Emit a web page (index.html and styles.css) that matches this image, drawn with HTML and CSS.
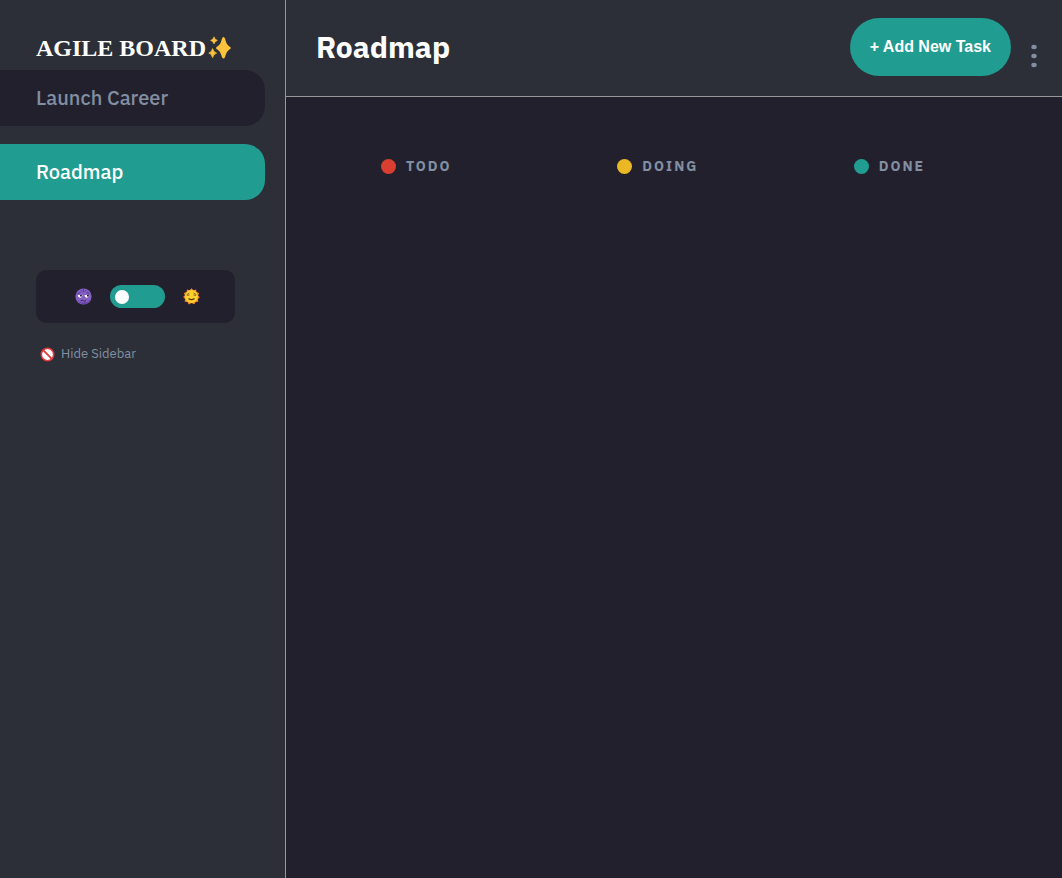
FILE: index.html
```html
<!DOCTYPE html>
<html lang="en">
<head>
<meta charset="utf-8">
<meta name="viewport" content="width=device-width, initial-scale=1">
<title>Agile Board</title>
<link rel="stylesheet" href="styles.css">
</head>
<body>
<div class="app">
  <aside class="sidebar">
    <div class="logo">
      <span>AGILE BOARD</span>
      <svg class="logo-icon" viewBox="0 0 24 24" aria-hidden="true">
        <g fill="#fbc23c">
          <path d="M15.5 1 Q16.6 1 17 2.5 C18.4 7.6 19.2 9 22.2 11 Q23.6 12 22.2 13 C19.2 15 18.4 16.4 17 21.2 Q15.5 24 14 21.2 C12.6 16.4 11.8 15 8.6 13 Q7.2 12 8.6 11 C11.8 9 12.6 7.6 14 2.5 Q14.4 1 15.5 1Z"/>
          <path d="M6 .8 Q6.7 3.8 9.4 4.4 Q6.7 5 6 8 Q5.3 5 2.6 4.4 Q5.3 3.8 6 .8Z" stroke="#fbc23c" stroke-width=".6"/>
          <path d="M4.6 12.6 Q5.4 16.2 8.6 17.1 Q5.4 18 4.6 21.6 Q3.8 18 .8 17.1 Q3.8 16.2 4.6 12.6Z" stroke="#fbc23c" stroke-width=".8"/>
        </g>
      </svg>
    </div>
    <nav class="boards">
      <a class="board" href="#launch-career">Launch Career</a>
      <a class="board board-active" href="#roadmap" aria-current="page">Roadmap</a>
    </nav>
    <div class="theme">
      <svg class="theme-icon" viewBox="0 0 18 18" aria-hidden="true">
        <circle cx="9" cy="9" r="8.6" fill="#8560c5"/>
        <path d="M1.5 12 Q4 16 9 17.4 Q14.5 16.8 16.5 12 Q13 15.8 9 15.6 Q4 15 1.5 12Z" fill="#60409a"/>
        <path d="M6 2.2 L7.5 3.8 M9 1.2 V4.2 M12 2.2 L10.8 3.8 M2.5 6 L6 4.6 M12 4.6 L15.5 6" stroke="#55368d" fill="none"/>
        <path d="M2.8 7.5 H8 Q7.7 10.5 5.3 10.3 Q3 10 2.8 7.5Z M10 7.5 H15.2 Q15 10 12.7 10.3 Q10.3 10.5 10 7.5Z" fill="#fff"/>
        <path d="M5.3 7.5 h2 v1.6 h-2z M12.7 7.5 h2 v1.6 h-2z" fill="#28203c"/>
        <path d="M6 13.6 Q7.5 12.2 9 13.6 T12 12.8" stroke="#342048" fill="none"/>
      </svg>
      <input class="switch" type="checkbox" role="switch" aria-label="Light theme">
      <svg class="theme-icon" viewBox="0 0 18 18" aria-hidden="true">
        <path d="M9 .2 L11 2.4 13.8 1.5 14.3 4.2 17 5.2 16 8 17.8 9.8 15.8 11.7 16.2 14.5 13.4 14.8 12 17.2 9 16 6.2 17.4 4.7 14.9 1.8 14.6 2.2 11.7 .2 9.6 2 7.8 1 5.2 3.7 4.2 4.3 1.5 7 2.4Z" fill="#fb872b"/>
        <circle cx="9" cy="9" r="6.8" fill="#ffd22f"/>
        <path d="M3.8 7.2 L6.8 5.2 M4.2 7.8 L7 7.4 M14.2 7.2 L11.2 5.2 M13.8 7.8 L11 7.4" stroke="#7a541c" stroke-width=".9" fill="none"/>
        <path d="M5.8 11 Q9 13.4 12.2 11" stroke="#5b3211" stroke-width="1.3" fill="none"/>
      </svg>
    </div>
    <button class="hide" type="button">
      <svg class="hide-icon" viewBox="0 0 15 15" aria-hidden="true">
        <circle cx="7.5" cy="7.5" r="6.2" fill="#fff" stroke="#e5383b" stroke-width="1.6"/>
        <path d="M3.2 3.2 L11.8 11.8" stroke="#e5383b" stroke-width="1.8"/>
      </svg>
      Hide Sidebar
    </button>
  </aside>
  <div class="content">
    <header class="header">
      <h1 class="title">Roadmap</h1>
      <button class="add" type="button">+ Add New Task</button>
      <button class="menu" type="button" aria-label="Board options">
        <svg class="menu-icon" viewBox="0 0 6 24" aria-hidden="true">
          <g fill="#828fa3"><ellipse cx="3" cy="3" rx="2.7" ry="2.2"/><ellipse cx="3" cy="12" rx="2.7" ry="2.2"/><ellipse cx="3" cy="21" rx="2.7" ry="2.2"/></g>
        </svg>
      </button>
    </header>
    <main class="columns">
      <section><h2 class="column-title"><span class="dot dot-todo"></span>TODO</h2></section>
      <section><h2 class="column-title"><span class="dot dot-doing"></span>DOING</h2></section>
      <section><h2 class="column-title"><span class="dot dot-done"></span>DONE</h2></section>
    </main>
  </div>
</div>
</body>
</html>
```
FILE: styles.css
```css
* { box-sizing: border-box; }

body {
  margin: 0;
  background: #23202d;
  color: #fff;
  font-family: "IBM Plex Sans", "Noto Sans", sans-serif;
}

button {
  border: 0;
  padding: 0;
  background: none;
  font-family: inherit;
  cursor: pointer;
}

.app {
  display: grid;
  grid-template-columns: 286px 1fr;
  min-height: 100vh;
}

.sidebar {
  background: #2c2f38;
  border-right: 1px solid #979797;
}

.logo {
  display: flex;
  align-items: center;
  gap: 2px;
  padding: 34px 0 8px 36px;
  font: bold 24px/28px "Liberation Serif", serif;
}

.logo-icon { width: 24px; height: 24px; }

.boards {
  display: grid;
  gap: 18px;
  margin-right: 20px;
}

.board {
  padding: 14px 36px;
  border-radius: 0 20px 20px 0;
  background: #23202d;
  color: #828fa3;
  font-size: 20px;
  font-weight: 500;
  line-height: 28px;
  text-decoration: none;
}

.board-active {
  background: #219c90;
  color: #fff;
}

.theme {
  display: flex;
  align-items: center;
  justify-content: center;
  gap: 18px;
  margin: 70px 50px 0 36px;
  padding: 15px 0 15px 4px;
  border-radius: 10px;
  background: #23202d;
}

.theme-icon { width: 17px; height: 17px; }

.switch {
  display: flex;
  align-items: center;
  appearance: none;
  width: 55px;
  height: 23px;
  margin: 0;
  padding: 0 5px;
  border-radius: 12px;
  background: #219c90;
  cursor: pointer;
}

.switch::before {
  content: "";
  width: 14px;
  height: 14px;
  border-radius: 50%;
  background: #fff;
}

.switch:checked { justify-content: flex-end; }

.hide {
  display: flex;
  align-items: center;
  gap: 6px;
  margin: 21px 0 0 40px;
  color: #828fa3;
  font-size: 13px;
  line-height: 20px;
}

.hide-icon { width: 15px; height: 15px; }

.header {
  display: flex;
  align-items: flex-start;
  padding: 18px 25px 20px 30px;
  border-bottom: 1px solid #979797;
  background: #2c2f38;
}

.title {
  flex: 1;
  margin: 9px 0 0;
  font-size: 30px;
  font-weight: 700;
  line-height: 40px;
}

.add {
  padding: 20px;
  border-radius: 30px;
  background: #219c90;
  color: #fff;
  font: bold 16px/18px "Liberation Sans", sans-serif;
}

.menu { margin: 26px 0 0 20px; }

.menu-icon {
  display: block;
  width: 6px;
  height: 24px;
}

.columns {
  display: grid;
  grid-template-columns: repeat(3, 1fr);
  gap: 64px;
  padding: 59px 36px 40px 95px;
}

.column-title {
  display: flex;
  align-items: center;
  gap: 10px;
  margin: 0;
  color: #828fa3;
  font-size: 14px;
  font-weight: 700;
  letter-spacing: 2px;
  line-height: 20px;
}

.dot {
  width: 15px;
  height: 15px;
  border-radius: 50%;
}

.dot-todo { background: #d83f31; }
.dot-doing { background: #e9b824; }
.dot-done { background: #219c90; }
```
